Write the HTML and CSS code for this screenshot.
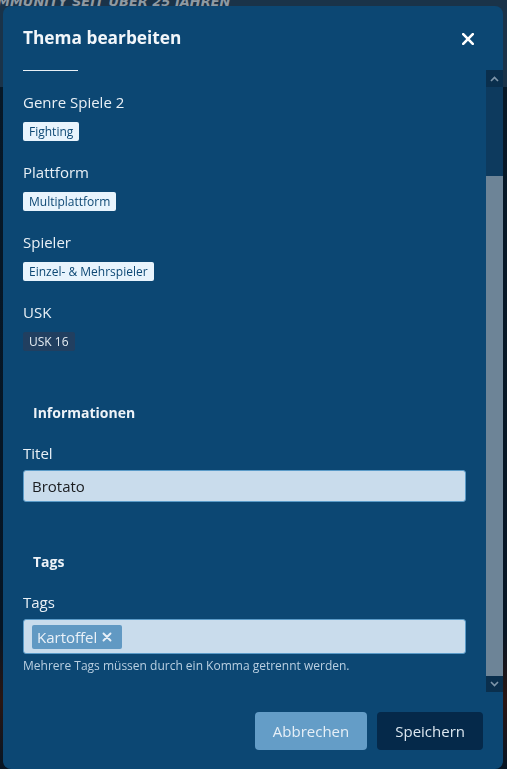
FILE: index.html
```html
<!DOCTYPE html>
<html lang="de">
<head>
<meta charset="utf-8">
<title>Thema bearbeiten</title>
<link rel="stylesheet" href="styles.css">
</head>
<body>
<div class="site">
  <div class="site-header"><span class="slogan">MMUNITY SEIT ÜBER 25 JAHREN</span></div>
  <div class="site-body"></div>
</div>
<div class="overlay">
  <div class="modal">
    <div class="modal-header">
      <h2 class="modal-title">Thema bearbeiten</h2>
      <button class="close" type="button" aria-label="Schließen">
        <svg width="12" height="12" viewBox="0 0 12 12"><path d="M1.2 1.2 L10.8 10.8 M10.8 1.2 L1.2 10.8" stroke="#ffffff" stroke-width="2.6" stroke-linecap="round" fill="none"/></svg>
      </button>
    </div>
    <div class="modal-body">
      <div class="scroll-content">
        <div class="rule"></div>
        <div class="field">
          <div class="label">Genre Spiele 2</div>
          <div class="badges"><span class="badge">Fighting</span></div>
        </div>
        <div class="field">
          <div class="label">Plattform</div>
          <div class="badges"><span class="badge">Multiplattform</span></div>
        </div>
        <div class="field">
          <div class="label">Spieler</div>
          <div class="badges"><span class="badge">Einzel- &amp; Mehrspieler</span></div>
        </div>
        <div class="field">
          <div class="label">USK</div>
          <div class="badges"><span class="badge badge-dark">USK 16</span></div>
        </div>

        <h3 class="section-title section-info">Informationen</h3>
        <div class="form-row">
          <div class="label">Titel</div>
          <div class="input">Brotato</div>
        </div>

        <h3 class="section-title section-tags">Tags</h3>
        <div class="form-row form-row-tags">
          <div class="label">Tags</div>
          <div class="input input-tags">
            <span class="chip">Kartoffel<svg class="chip-x" width="10" height="10" viewBox="0 0 10 10"><path d="M1.5 1.5 L8.5 8.5 M8.5 1.5 L1.5 8.5" stroke="#e8f0f8" stroke-width="1.9" stroke-linecap="round" fill="none"/></svg></span>
          </div>
          <div class="help">Mehrere Tags müssen durch ein Komma getrennt werden.</div>
        </div>
      </div>
      <div class="scrollbar">
        <div class="sb-btn sb-up"><svg width="9" height="6" viewBox="0 0 9 6"><path d="M1 5 L4.5 1.5 L8 5" stroke="#7f96aa" stroke-width="1.6" fill="none"/></svg></div>
        <div class="sb-track"></div>
        <div class="sb-thumb"></div>
        <div class="sb-btn sb-down"><svg width="9" height="6" viewBox="0 0 9 6"><path d="M1 1 L4.5 4.5 L8 1" stroke="#7f96aa" stroke-width="1.6" fill="none"/></svg></div>
      </div>
    </div>
    <div class="modal-footer">
      <button class="btn btn-secondary" type="button">Abbrechen</button>
      <button class="btn btn-primary" type="button">Speichern</button>
    </div>
  </div>
</div>
</body>
</html>
```

FILE: styles.css
```css
* { box-sizing: border-box; }

html, body {
  margin: 0;
  padding: 0;
  height: 100%;
}

body {
  background: #06192a;
  font-family: "Open Sans", "Noto Sans", "DejaVu Sans", sans-serif;
  overflow: hidden;
}

.site {
  display: flex;
  flex-direction: column;
  height: 100%;
}

.site-header {
  height: 87px;
  background: #1a3349;
  overflow: hidden;
}

.slogan {
  display: block;
  margin-top: -5px;
  margin-left: -3px;
  font-family: "DejaVu Sans", sans-serif;
  font-weight: bold;
  font-style: italic;
  font-size: 13px;
  line-height: 14px;
  color: #8f9aa3;
  white-space: nowrap;
}

.site-body {
  flex: 1;
  background: linear-gradient(180deg, #071827 0%, #061524 80%, #2a1612 90%, #061524 100%);
}

.overlay {
  position: fixed;
  inset: 0;
}

.modal {
  margin: 6px 4px 0 3px;
  height: 763px;
  background: #0c4773;
  border-radius: 8px;
  display: flex;
  flex-direction: column;
  overflow: hidden;
  color: #e9f0f6;
}

.modal-header {
  height: 64px;
  padding: 20px 29px 20px 20px;
  display: flex;
  align-items: center;
  justify-content: space-between;
  flex: none;
}

.modal-title {
  margin: 0;
  font-size: 17.3px;
  line-height: 24px;
  font-weight: 700;
  color: #f2f6fa;
}

.close {
  border: 0;
  padding: 0;
  background: none;
  width: 12px;
  height: 12px;
  display: flex;
  margin-top: 1px;
}

.modal-body {
  flex: 1;
  display: flex;
  min-height: 0;
}

.scroll-content {
  flex: 1;
  padding: 0 20px;
  overflow: hidden;
}

.rule {
  width: 55px;
  height: 1px;
  background: #e9f0f6;
}

.field {
  display: flex;
  flex-direction: column;
  align-items: flex-start;
  margin-bottom: 21px;
}

.rule + .field {
  margin-top: 21px;
}

.label {
  font-size: 15px;
  line-height: 20px;
  color: #e9f0f6;
}

.badges {
  display: flex;
  margin-top: 10px;
}

.badge {
  display: block;
  font-size: 12px;
  line-height: 19px;
  padding: 0 6px;
  border-radius: 2px;
  background: #e8f4fd;
  color: #0d4874;
}

.badge-dark {
  background: #213f60;
  color: #e6edf3;
}

.section-title {
  margin: 0;
  padding-left: 10px;
  font-size: 14px;
  line-height: 20px;
  font-weight: 700;
  color: #eef3f8;
}

.section-info {
  margin-top: 51.5px;
}

.section-tags {
  margin-top: 50px;
}

.form-row {
  margin-top: 20px;
  display: flex;
  flex-direction: column;
}

.form-row-tags {
  margin-top: 20.5px;
}

.form-row .label {
  margin-bottom: 7px;
}

.input {
  height: 32px;
  padding: 5px 8px;
  border: 1px solid #5b9bc8;
  border-radius: 3px;
  background: #c9dcec;
  color: #1b1d20;
  font-size: 15px;
  line-height: 20px;
}

.input-tags {
  height: 35px;
  padding: 5px 8px 4px;
  display: flex;
  align-items: flex-start;
}

.chip {
  display: flex;
  align-items: center;
  height: 24px;
  padding: 0 10px 0 5px;
  border-radius: 2px;
  background: #6199c3;
  color: #eaf1f8;
  font-size: 15px;
  line-height: 20px;
}

.chip-x {
  margin-left: 5px;
}

.help {
  margin-top: 4px;
  font-size: 12px;
  line-height: 16px;
  color: #b9cfe1;
}

.scrollbar {
  width: 17px;
  flex: none;
  display: flex;
  flex-direction: column;
  background: #0d3a5e;
}

.sb-btn {
  background: #0a2f4d;
  display: flex;
  align-items: center;
  justify-content: center;
}

.sb-up { height: 17px; }
.sb-down { height: 16px; }

.sb-track {
  height: 89px;
  background: #0d3a5e;
}

.sb-thumb {
  flex: 1;
  background: #6d8497;
}

.modal-footer {
  height: 77px;
  flex: none;
  padding: 20px 20px 19px;
  display: flex;
  justify-content: flex-end;
  gap: 10px;
}

.btn {
  height: 38px;
  padding: 0 18px;
  border: 0;
  border-radius: 4px;
  font-family: inherit;
  font-size: 15px;
  line-height: 20px;
}

.btn-secondary {
  background: #649dc7;
  color: #e6eff7;
}

.btn-primary {
  background: #05294a;
  color: #dce7f0;
}
```
